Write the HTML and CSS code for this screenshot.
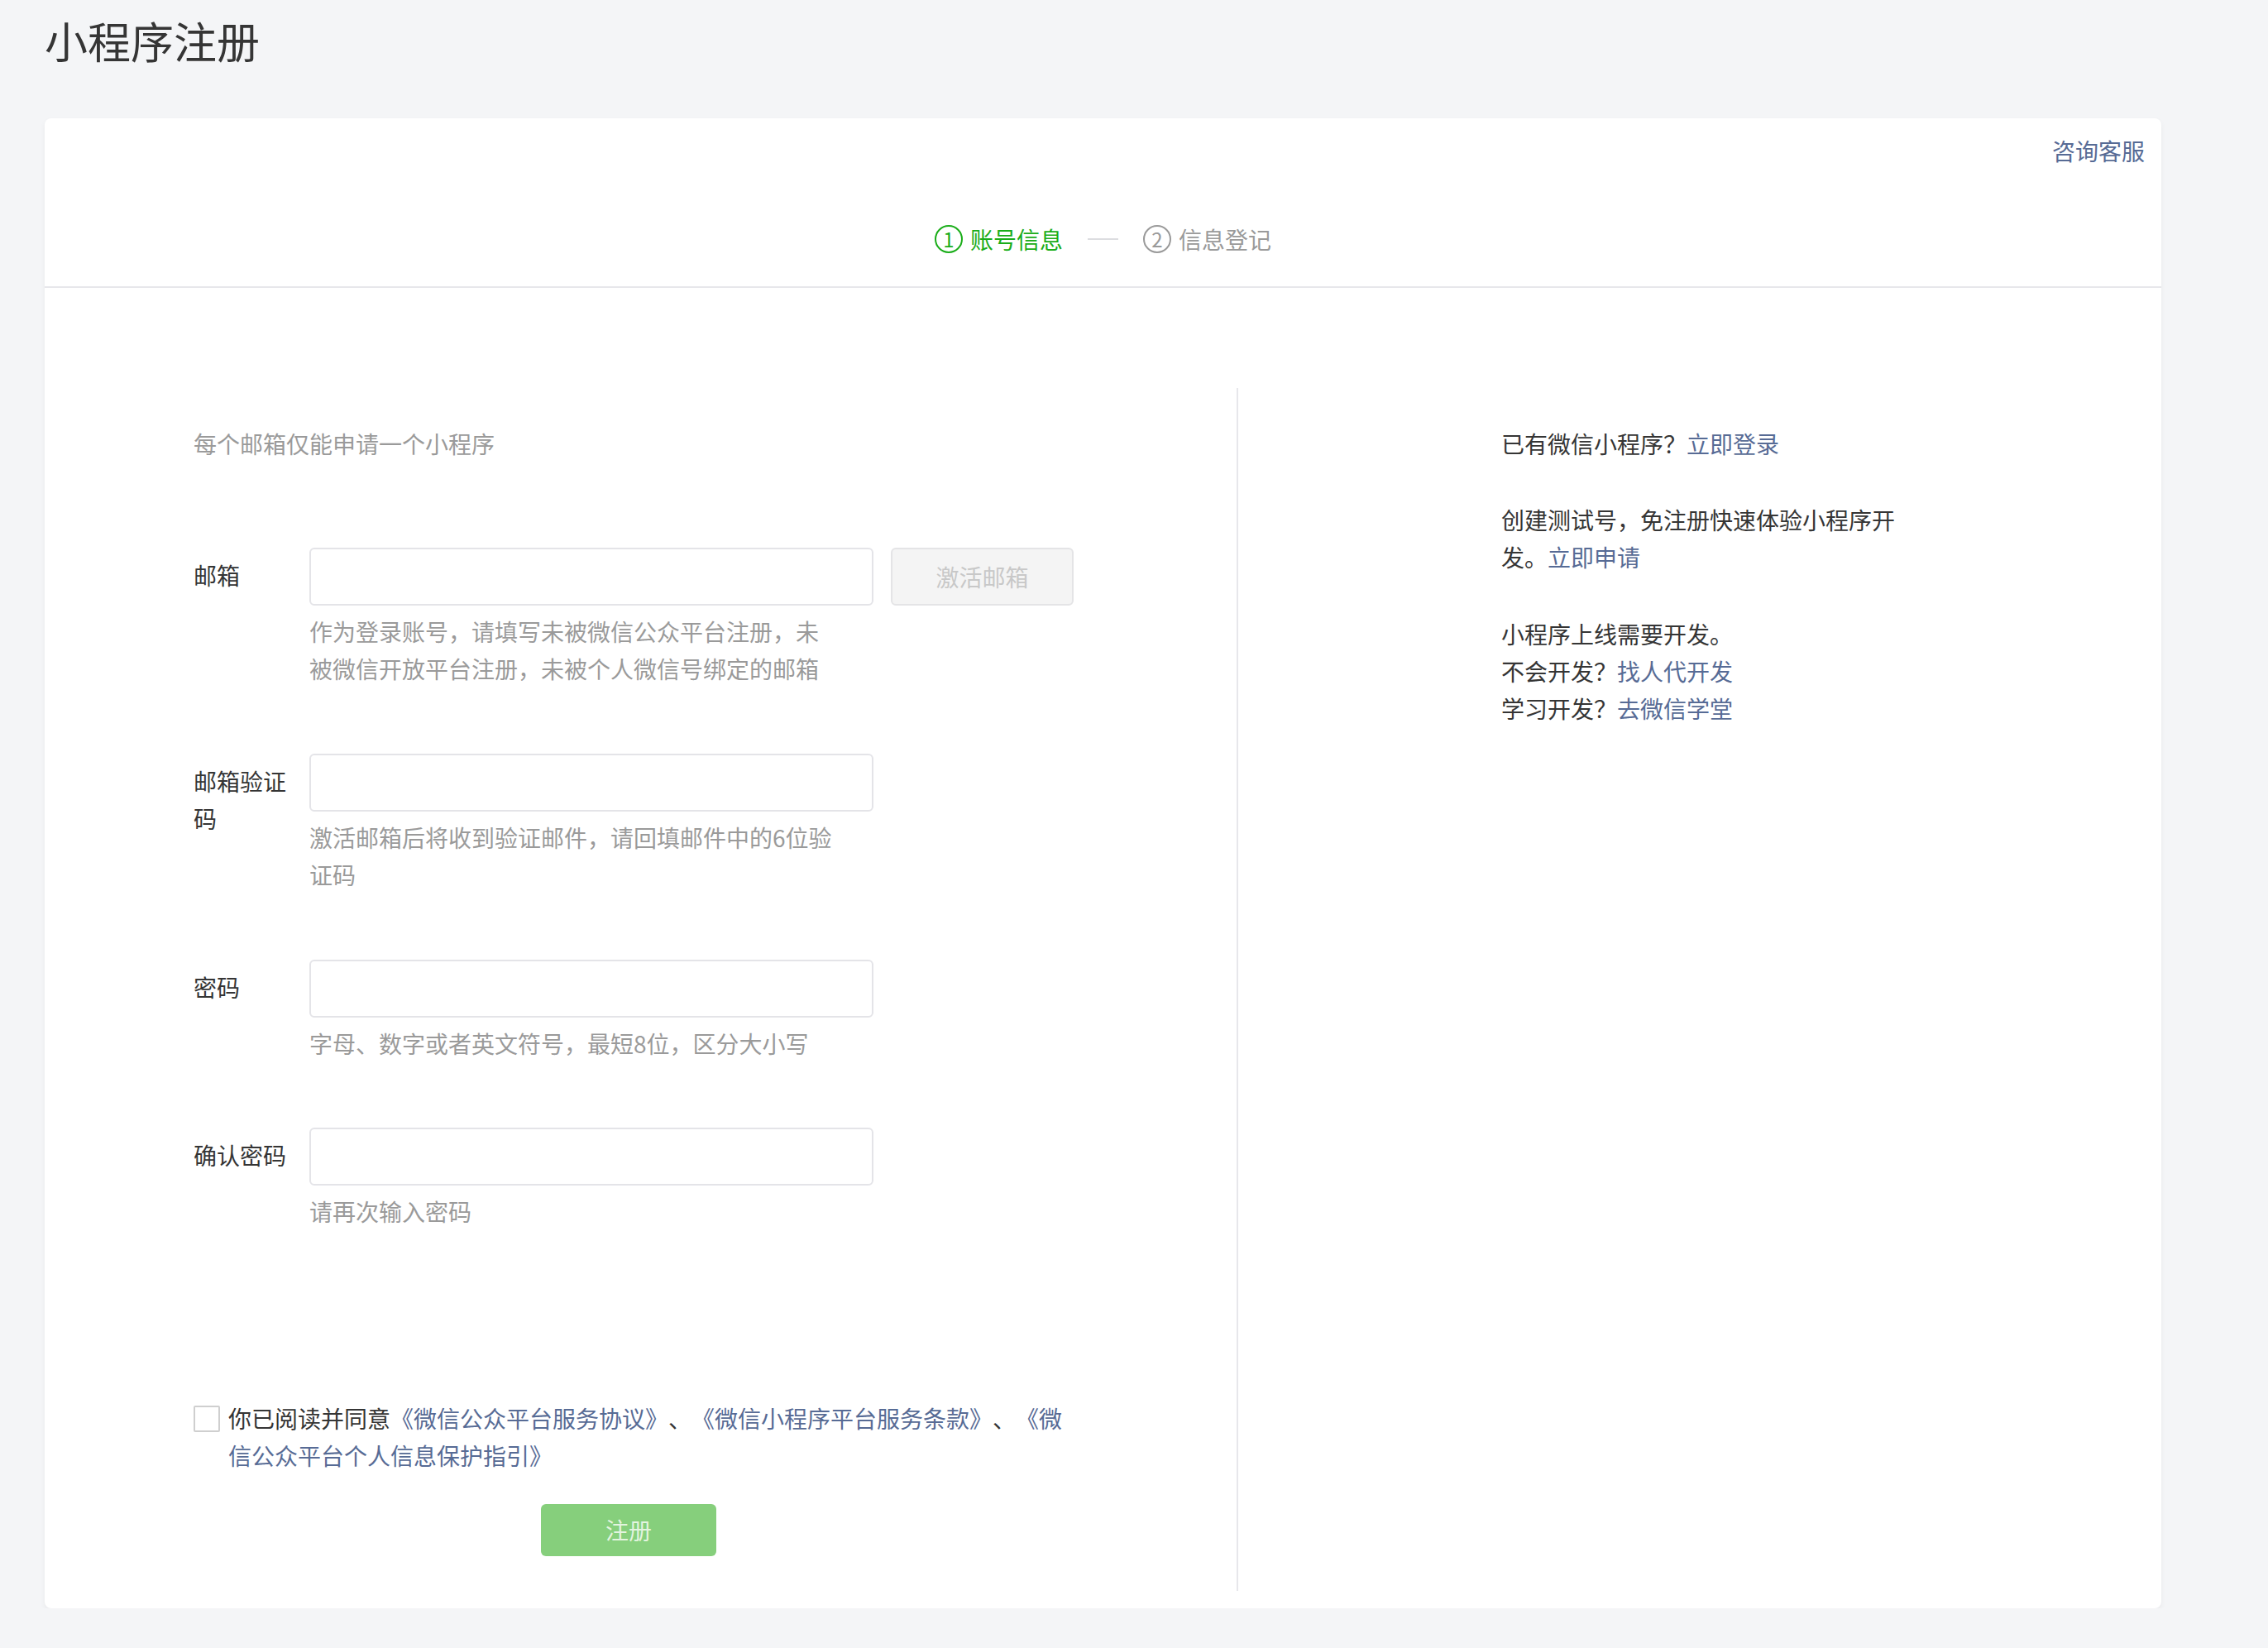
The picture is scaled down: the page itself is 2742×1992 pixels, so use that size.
FILE: index.html
```html
<!DOCTYPE html>
<html lang="zh-CN">

<head>
    <meta charset="UTF-8">
    <meta name="viewport" content="width=device-width, initial-scale=1.0">
    <title>小程序注册</title>
    <link rel="stylesheet" href="styles.css">
</head>

<body>
    <div class="page">
        <h1 class="page-title">小程序注册</h1>

        <div class="card">
            <!-- 顶部：客服 + 步骤 -->
            <div class="card-hd">
                <div class="hd-top"><a class="link" href="#">咨询客服</a></div>
                <ol class="steps">
                    <li class="step current"><span class="step-num">1</span>账号信息</li>
                    <li class="step-line"></li>
                    <li class="step"><span class="step-num">2</span>信息登记</li>
                </ol>
            </div>

            <div class="card-bd">
                <!-- 左边表单 -->
                <div class="main-col">
                    <p class="intro">每个邮箱仅能申请一个小程序</p>

                    <div class="form-row">
                        <label class="form-label">邮箱</label>
                        <div class="form-field">
                            <div class="field-line">
                                <input class="form-input" type="text">
                                <a class="btn-default" href="#">激活邮箱</a>
                            </div>
                            <p class="form-hint">作为登录账号，请填写未被微信公众平台注册，未被微信开放平台注册，未被个人微信号绑定的邮箱</p>
                        </div>
                    </div>

                    <div class="form-row">
                        <label class="form-label">邮箱验证码</label>
                        <div class="form-field">
                            <input class="form-input" type="text">
                            <p class="form-hint">激活邮箱后将收到验证邮件，请回填邮件中的6位验证码</p>
                        </div>
                    </div>

                    <div class="form-row">
                        <label class="form-label">密码</label>
                        <div class="form-field">
                            <input class="form-input" type="password">
                            <p class="form-hint">字母、数字或者英文符号，最短8位，区分大小写</p>
                        </div>
                    </div>

                    <div class="form-row">
                        <label class="form-label">确认密码</label>
                        <div class="form-field">
                            <input class="form-input" type="password">
                            <p class="form-hint">请再次输入密码</p>
                        </div>
                    </div>

                    <div class="agree">
                        <span class="checkbox"></span>
                        <p class="agree-text">你已阅读并同意<a class="link" href="#">《微信公众平台服务协议》</a>、<a class="link" href="#">《微信小程序平台服务条款》</a>、<a class="link" href="#">《微信公众平台个人信息保护指引》</a></p>
                    </div>

                    <a class="btn-primary" href="#">注册</a>
                </div>

                <!-- 右边说明 -->
                <div class="side-col">
                    <p>已有微信小程序？<a class="link" href="#">立即登录</a></p>
                    <p>创建测试号，免注册快速体验小程序开发。<a class="link" href="#">立即申请</a></p>
                    <p>小程序上线需要开发。<br>不会开发？<a class="link" href="#">找人代开发</a><br>学习开发？<a class="link" href="#">去微信学堂</a></p>
                </div>
            </div>
        </div>
    </div>
</body>

</html>
```

FILE: styles.css
```css
* {
    margin: 0;
    padding: 0;
    box-sizing: border-box;
}

body {
    background-color: #f4f5f7;
    font-family: "Noto Sans CJK SC", "Noto Sans", sans-serif;
    font-size: 28px;
    line-height: 1.6;
    color: #353535;
    text-spacing-trim: space-all;
}

a {
    text-decoration: none;
}

.link {
    color: #576b95;
}

.page {
    padding: 12px 0 0 54px;
}

.page-title {
    font-size: 52px;
    font-weight: normal;
    line-height: 73px;
    color: #353535;
    margin-bottom: 58px;
}

/* 白色卡片 */
.card {
    width: 2559px;
    background-color: #fff;
    border-radius: 8px;
    box-shadow: 0 3px 6px rgba(0, 0, 0, .05);
}

.card-hd {
    border-bottom: 2px solid #e7e7eb;
    padding-bottom: 34px;
}

.hd-top {
    display: flex;
    justify-content: flex-end;
    padding: 17px 20px 0;
}

/* 步骤条 */
.steps {
    list-style: none;
    display: flex;
    justify-content: center;
    align-items: center;
    margin-top: 62px;
    color: #9a9a9a;
}

.step {
    display: flex;
    align-items: center;
}

.step.current {
    color: #1aad19;
}

.step-num {
    width: 34px;
    height: 34px;
    border: 2px solid currentColor;
    border-radius: 50%;
    font-size: 24px;
    line-height: 30px;
    text-align: center;
    margin-right: 9px;
}

.step-line {
    width: 37px;
    height: 2px;
    background-color: #dcdde0;
    margin: 0 30px;
}

/* 主体 */
.card-bd {
    display: flex;
    padding: 121px 0 21px;
}

.main-col {
    width: 1443px;
    padding: 45px 0 42px 180px;
    border-right: 2px solid #e7e7eb;
}

.intro {
    color: #9a9a9a;
    margin-bottom: 104px;
}

.form-row {
    display: flex;
    margin-bottom: 80px;
}

.form-label {
    width: 140px;
    padding: 11px 20px 0 0;
}

.field-line {
    display: flex;
}

.form-input {
    display: block;
    width: 682px;
    height: 70px;
    border: 2px solid #e4e4e8;
    border-radius: 6px;
    background: #fff;
    outline: none;
}

.btn-default {
    width: 221px;
    height: 70px;
    margin-left: 21px;
    border: 2px solid #e4e4e6;
    border-radius: 6px;
    background-color: #f4f4f4;
    color: #c8c8c8;
    line-height: 66px;
    text-align: center;
}

.form-hint {
    width: 640px;
    margin-top: 9px;
    color: #9a9a9a;
}

/* 协议 */
.agree {
    display: flex;
    width: 1064px;
    margin-top: 205px;
}

.checkbox {
    flex: none;
    width: 32px;
    height: 32px;
    margin: 7px 10px 0 0;
    border: 2px solid #cfcfcf;
    border-radius: 2px;
    background-color: #fff;
}

.agree-text {
    flex: 1;
}

.btn-primary {
    display: block;
    width: 212px;
    height: 63px;
    margin: 36px 0 0 420px;
    border-radius: 6px;
    background-color: #86cf7c;
    color: #e3f4df;
    line-height: 63px;
    text-align: center;
}

/* 右边说明 */
.side-col {
    flex: 1;
    padding: 45px 0 0 318px;
}

.side-col p {
    width: 490px;
    margin-bottom: 48px;
}
```
